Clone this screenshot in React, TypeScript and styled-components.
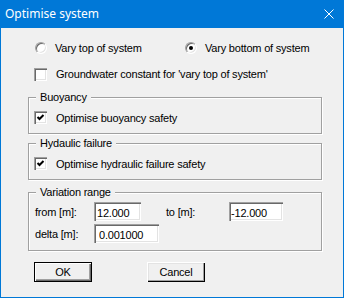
import React, { FC } from 'react';
import styled, { createGlobalStyle } from 'styled-components';

const GlobalStyle = createGlobalStyle`
html, body {
  margin: 0;
  padding: 0;
  background: #ffffff;
}
`;

const Window = styled.div`
width: 344px;
height: 298px;
box-sizing: border-box;
border: 1px solid #0078d7;
border-top: none;
background: #f0f0f0;
display: flex;
flex-direction: column;
font-family: "Liberation Sans", Arial, sans-serif;
font-size: 11px;
letter-spacing: -0.2px;
color: #000;
`;

const TitleBar = styled.div`
height: 27px;
margin: 0 -1px;
background: #0078d7;
display: flex;
align-items: center;
justify-content: space-between;
padding: 0 10px 1px 5px;
`;

const Title = styled.span`
font-family: "Noto Sans", "Open Sans", sans-serif;
font-size: 12px;
letter-spacing: 0;
color: #ffffff;
`;

const CloseIcon = styled.svg`
width: 10px;
height: 10px;
display: block;
`;

const Body = styled.div`
display: flex;
flex-direction: column;
padding: 0 21px 0 27px;
`;

const OptionRow = styled.div`
display: flex;
align-items: center;
height: 12px;
margin: ${p => p.$top}px 0 0 ${p => p.$left}px;
`;

const Option = styled.label`
display: flex;
align-items: center;
width: ${p => (p.$w ? `${p.$w}px` : 'auto')};
white-space: nowrap;
`;

const Radio = styled.span`
width: 12px;
height: 12px;
box-sizing: border-box;
border-radius: 50%;
border: 1px solid;
border-color: #a0a0a0 #ffffff #ffffff #a0a0a0;
box-shadow: inset 1px 1px 0 #696969, inset -1px -1px 0 #e3e3e3;
background: #ffffff;
display: flex;
align-items: center;
justify-content: center;
margin-right: 8px;
flex: none;
`;

const Dot = styled.span`
width: 4px;
height: 4px;
border-radius: 50%;
background: #000;
`;

const Box = styled.span`
width: 13px;
height: 13px;
box-sizing: border-box;
background: #ffffff;
box-shadow: inset 1px 1px 0 #a0a0a0, inset 2px 2px 0 #696969, inset -1px -1px 0 #ffffff, inset -2px -2px 0 #e3e3e3;
margin-right: 9px;
flex: none;
display: block;
`;

const Group = styled.fieldset`
margin: ${p => p.$top}px 0 0 0;
padding: 0 5px ${p => p.$bottom}px;
border: 1px solid #a0a0a0;
box-shadow: inset 1px 1px 0 #ffffff, 1px 1px 0 #ffffff;
min-width: 0;
`;

const Legend = styled.legend`
margin-left: 2px;
padding: 0 4px;
line-height: 13px;
background: #f0f0f0;
`;

const GroupRow = styled.div`
display: flex;
align-items: center;
margin-top: ${p => p.$top}px;
padding-left: ${p => p.$left || 0}px;
`;

const FieldLabel = styled.span`
width: ${p => p.$w}px;
margin-left: ${p => p.$ml || 0}px;
padding-left: 1px;
box-sizing: border-box;
white-space: nowrap;
`;

const Edit = styled.input`
width: ${p => p.$w}px;
height: 19px;
box-sizing: border-box;
border: none;
outline: none;
margin: 0;
padding: 2px 0 0 ${p => p.$pad}px;
background: #ffffff;
box-shadow: inset 1px 1px 0 #a0a0a0, inset 2px 2px 0 #696969, inset -1px -1px 0 #ffffff, inset -2px -2px 0 #e3e3e3;
font-family: "Liberation Sans", Arial, sans-serif;
font-size: 11px;
letter-spacing: -0.2px;
color: #000;
`;

const ButtonRow = styled.div`
display: flex;
gap: 55px;
margin: 11px 0 0 6px;
`;

const Button = styled.button`
width: 58px;
height: 20px;
box-sizing: border-box;
margin: 0;
padding: 0;
border: ${p => (p.$default ? '1px solid #000' : 'none')};
background: #f0f0f0;
box-shadow: ${p =>
  p.$default
    ? 'inset 1px 1px 0 #ffffff, inset -1px -1px 0 #696969, inset -2px -2px 0 #a0a0a0'
    : 'inset 1px 1px 0 #ffffff, inset -1px -1px 0 #000000, inset -2px -2px 0 #a0a0a0, inset 2px 2px 0 #e3e3e3'};
font-family: "Liberation Sans", Arial, sans-serif;
font-size: 11px;
letter-spacing: -0.2px;
color: #000;
`;

const Check: FC = () => (
  <Box>
    <svg width="13" height="13" viewBox="0 0 13 13" style={{ display: 'block' }}>
      <polyline points="3.5,6 5.5,8 9.5,4" fill="none" stroke="#000" strokeWidth="2" />
    </svg>
  </Box>
);

const App: FC = () => (
  <>
    <GlobalStyle />
    <Window>
      <TitleBar>
        <Title>Optimise system</Title>
        <CloseIcon viewBox="0 0 10 10">
          <path d="M0.5 0.5 L9.5 9.5 M9.5 0.5 L0.5 9.5" stroke="#fff" strokeWidth="1" />
        </CloseIcon>
      </TitleBar>
      <Body>
        <OptionRow $top={14} $left={7}>
          <Option $w={150}>
            <Radio />
            Vary top of system
          </Option>
          <Option>
            <Radio>
              <Dot />
            </Radio>
            Vary bottom of system
          </Option>
        </OptionRow>
        <OptionRow $top={14} $left={6}>
          <Option>
            <Box />
            Groundwater constant for 'vary top of system'
          </Option>
        </OptionRow>
        <Group $top={11} $bottom={9}>
          <Legend>Buoyancy</Legend>
          <GroupRow $top={7}>
            <Option>
              <Check />
              Optimise buoyancy safety
            </Option>
          </GroupRow>
        </Group>
        <Group $top={3} $bottom={9}>
          <Legend>Hydaulic failure</Legend>
          <GroupRow $top={7}>
            <Option>
              <Check />
              Optimise hydraulic failure safety
            </Option>
          </GroupRow>
        </Group>
        <Group $top={6} $bottom={7}>
          <Legend>Variation range</Legend>
          <GroupRow $top={3}>
            <FieldLabel $w={60}>from [m]:</FieldLabel>
            <Edit $w={47} $pad={3} readOnly value="12.000" />
            <FieldLabel $w={64} $ml={24}>to [m]:</FieldLabel>
            <Edit $w={54} $pad={2} readOnly value="-12.000" />
          </GroupRow>
          <GroupRow $top={3}>
            <FieldLabel $w={60}>delta [m]:</FieldLabel>
            <Edit $w={65} $pad={5} readOnly value="0.001000" />
          </GroupRow>
        </Group>
        <ButtonRow>
          <Button $default>OK</Button>
          <Button>Cancel</Button>
        </ButtonRow>
      </Body>
    </Window>
  </>
);

export default App;
